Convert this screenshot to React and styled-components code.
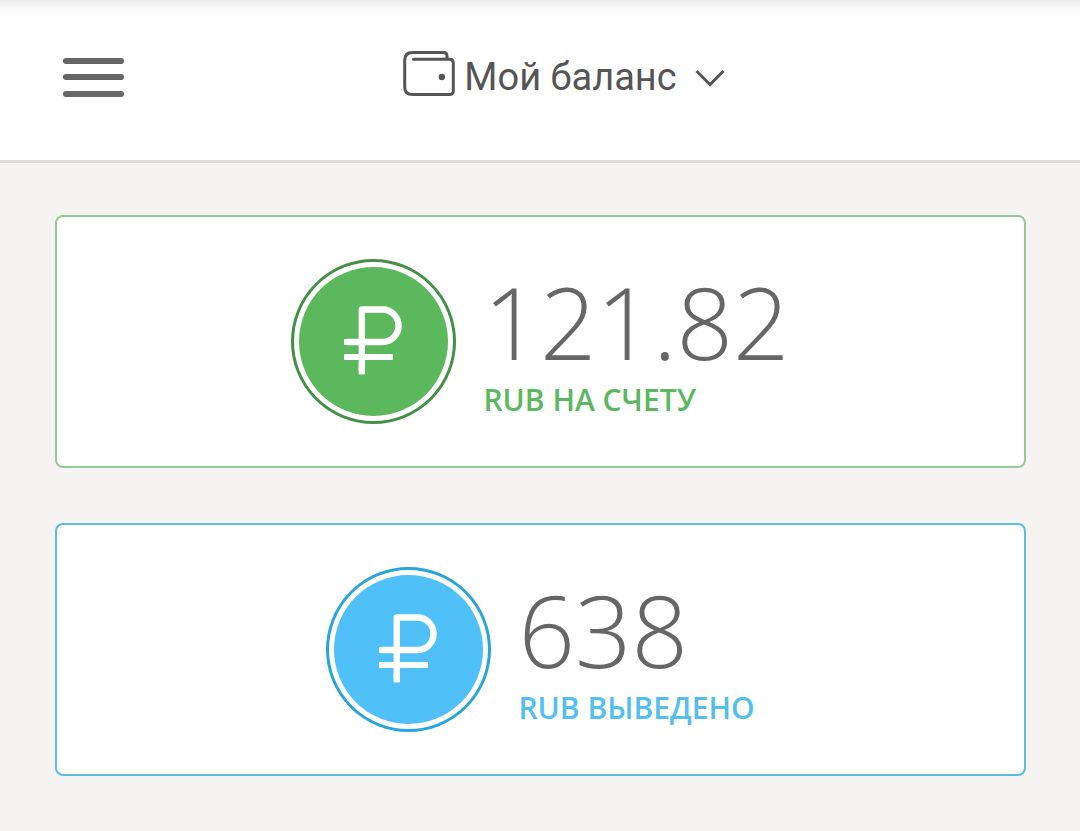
import React from "react";
import styled, { createGlobalStyle } from "styled-components";

const cards = [
  {
    id: "account",
    amount: "121.82",
    label: "RUB НА СЧЕТУ",
    color: "#5cb85c",
    text: "#5cb860",
    ring: "#449048",
    border: "#96ca98",
  },
  {
    id: "paid",
    amount: "638",
    label: "RUB ВЫВЕДЕНО",
    color: "#4fc1f8",
    text: "#54bfee",
    ring: "#27a5dc",
    border: "#5bbde2",
  },
];

function WalletIcon() {
  return (
    <svg width='52' height='52' viewBox='0 0 52 52' fill='none' stroke='#555' strokeWidth='3' strokeLinecap='round' aria-hidden='true'>
      <path d='M10.500 8.200H46.500Q50.300 8.200 50.300 12V39.500Q50.300 43.600 46.200 43.600H9.500Q1.700 43.600 1.700 35.800V9.500Q1.700 1.600 9.500 1.600H40.500Q44 1.600 44 5V8' />
      <circle cx='38.800' cy='26' r='3.200' fill='#555' stroke='none' />
    </svg>
  );
}

function ChevronIcon() {
  return (
    <svg width='30' height='20' viewBox='0 0 30 20' fill='none' stroke='#555' strokeWidth='3' aria-hidden='true'>
      <path d='M1.500 4L15 17.600L28.500 4' />
    </svg>
  );
}

function RubleIcon() {
  return (
    <svg width='59' height='69' viewBox='0 0 59 69' fill='none' stroke='#fff' strokeWidth='6.400' strokeLinejoin='round' aria-hidden='true'>
      <path d='M17.800 64V3.500H38.500A16 16.200 0 0 1 38.500 36H3' />
      <rect x='0' y='33' width='6' height='6' rx='1' fill='#fff' stroke='none' />
      <rect x='0' y='48' width='49' height='6' rx='1' fill='#fff' stroke='none' />
      <rect x='14.600' y='60' width='6.400' height='8.500' rx='1' fill='#fff' stroke='none' />
    </svg>
  );
}

function App() {
  return (
    <>
      <GlobalStyle />
      <Header>
        <MenuButton type='button' aria-label='Меню'>
          <MenuLine />
          <MenuLine />
          <MenuLine />
        </MenuButton>
        <TitleWrapper>
          <TitleButton type='button' aria-haspopup='true'>
            <WalletIcon />
            <span>Мой баланс</span>
            <ChevronIcon />
          </TitleButton>
        </TitleWrapper>
      </Header>
      <Main>
        {cards.map((card) => (
          <Card key={card.id} $border={card.border}>
            <Ring $color={card.ring}>
              <Coin $color={card.color}>
                <RubleIcon />
              </Coin>
            </Ring>
            <div>
              <Amount>{card.amount}</Amount>
              <Label $color={card.text}>{card.label}</Label>
            </div>
          </Card>
        ))}
      </Main>
    </>
  );
}

export default App;

const GlobalStyle = createGlobalStyle`
  * {
    box-sizing: border-box;
  }

  body {
    margin: 0;
    background-color: #f5f4f2;
    font-family: "Open Sans", sans-serif;
  }
`;

const Header = styled.header`
  display: flex;
  align-items: center;
  padding: 0 76px 6px 63px;
  height: 163px;
  border-bottom: 3px solid #dddddb;
  background: linear-gradient(#e9e9e9, #f9f9f9 8px, #fff 18px);
`;

const MenuButton = styled.button`
  display: flex;
  flex-direction: column;
  justify-content: space-between;
  width: 61px;
  height: 39px;
  padding: 0;
  border: 0;
  background: none;
  cursor: pointer;
`;

const MenuLine = styled.span`
  width: 100%;
  height: 6px;
  border-radius: 3px;
  background-color: #666;
`;

const TitleWrapper = styled.div`
  flex: 1;
  display: flex;
  justify-content: center;
`;

const TitleButton = styled.button`
  display: flex;
  align-items: center;
  padding: 0;
  border: 0;
  background: none;
  color: #555;
  font-family: Roboto, sans-serif;
  font-size: 38px;
  line-height: 52px;
  cursor: pointer;

  span {
    margin: 0 18px 0 9px;
  }
`;

const Main = styled.main`
  display: flex;
  flex-direction: column;
  gap: 55px;
  padding: 52px 54px 55px 55px;
`;

const Card = styled.section`
  display: flex;
  justify-content: center;
  align-items: center;
  gap: 27px;
  padding: 42px 0;
  border: 2px solid ${(props) => props.$border};
  border-radius: 8px;
  background-color: #fff;
`;

const Ring = styled.div`
  width: 165px;
  height: 165px;
  padding: 5px;
  border: 3px solid ${(props) => props.$color};
  border-radius: 50%;
`;

const Coin = styled.div`
  display: flex;
  justify-content: center;
  align-items: center;
  height: 100%;
  padding-bottom: 3px;
  border-radius: 50%;
  background-color: ${(props) => props.$color};
`;

const Amount = styled.p`
  margin: 0;
  color: #666;
  font-size: 99px;
  font-weight: 300;
  line-height: 116px;
`;

const Label = styled.p`
  margin: 0;
  color: ${(props) => props.$color};
  font-size: 30px;
  font-weight: 600;
  line-height: 40px;
`;
